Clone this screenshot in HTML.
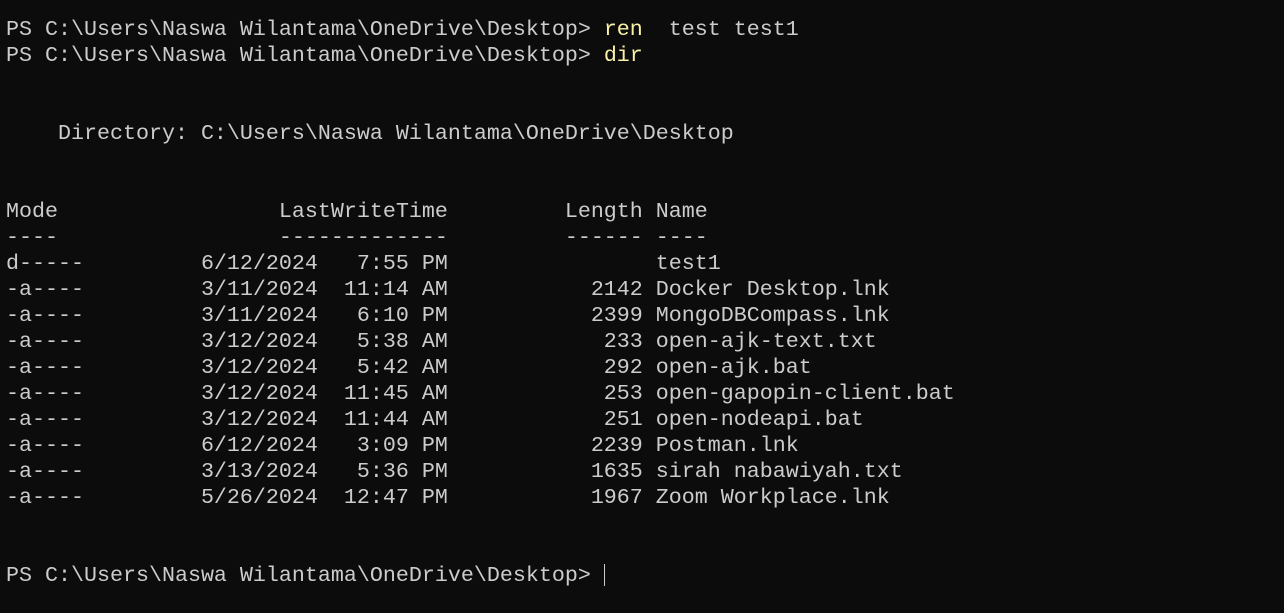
<!DOCTYPE html>
<html><head><meta charset="utf-8"><style>
html,body{margin:0;padding:0;background:#0c0c0c;width:1284px;height:613px;overflow:hidden}
pre{margin:0;padding:17px 0 0 6px;font-family:"Liberation Mono","DejaVu Sans Mono",monospace;font-size:21.67px;line-height:26px;color:#cccccc;letter-spacing:0}
.y{color:#f9f1a5}
.c{display:inline-block;width:1px;height:22px;background:#cccccc;vertical-align:-5px}
</style></head><body><pre>PS C:\Users\Naswa Wilantama\OneDrive\Desktop&gt; <span class="y">ren</span>  test test1
PS C:\Users\Naswa Wilantama\OneDrive\Desktop&gt; <span class="y">dir</span>


    Directory: C:\Users\Naswa Wilantama\OneDrive\Desktop


Mode                 LastWriteTime         Length Name
----                 -------------         ------ ----
d-----         6/12/2024   7:55 PM                test1
-a----         3/11/2024  11:14 AM           2142 Docker Desktop.lnk
-a----         3/11/2024   6:10 PM           2399 MongoDBCompass.lnk
-a----         3/12/2024   5:38 AM            233 open-ajk-text.txt
-a----         3/12/2024   5:42 AM            292 open-ajk.bat
-a----         3/12/2024  11:45 AM            253 open-gapopin-client.bat
-a----         3/12/2024  11:44 AM            251 open-nodeapi.bat
-a----         6/12/2024   3:09 PM           2239 Postman.lnk
-a----         3/13/2024   5:36 PM           1635 sirah nabawiyah.txt
-a----         5/26/2024  12:47 PM           1967 Zoom Workplace.lnk


PS C:\Users\Naswa Wilantama\OneDrive\Desktop&gt; <span class="c"></span></pre></body></html>
